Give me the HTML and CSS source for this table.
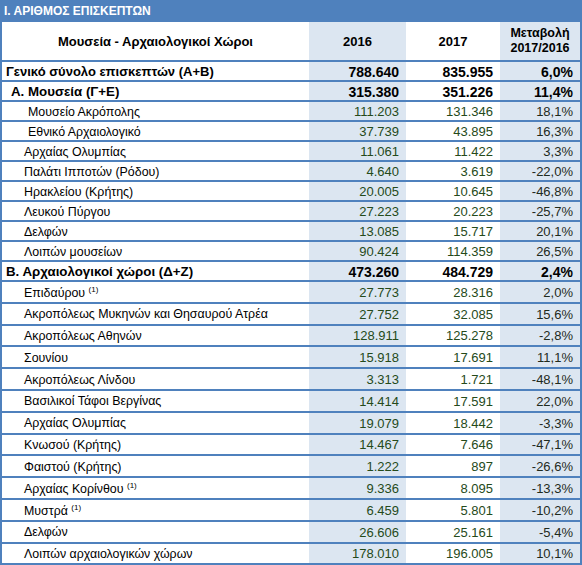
FILE: index.html
```html
<!DOCTYPE html>
<html lang="el">
<head>
  <meta charset="UTF-8" />
  <title>Αριθμός επισκεπτών</title>
  <link rel="stylesheet" href="styles.css">
</head>
<body>

<div class="sheet">
  <div class="title">Ι. ΑΡΙΘΜΟΣ ΕΠΙΣΚΕΠΤΩΝ</div>

  <table class="visitors">
    <colgroup>
      <col class="c-name">
      <col class="c-y1">
      <col class="c-y2">
      <col class="c-ch">
    </colgroup>
    <thead>
      <tr>
        <th class="name">Μουσεία - Αρχαιολογικοί Χώροι</th>
        <th class="shade">2016</th>
        <th>2017</th>
        <th class="shade small">Μεταβολή<br>2017/2016</th>
      </tr>
    </thead>
    <tbody>
      <tr class="total">
        <td class="lvl0">Γενικό σύνολο επισκεπτών (Α+Β)</td>
        <td class="shade">788.640</td><td>835.955</td><td class="shade">6,0%</td>
      </tr>
      <tr class="group">
        <td class="lvl1">Α. Μουσεία (Γ+Ε)</td>
        <td class="shade">315.380</td><td>351.226</td><td class="shade">11,4%</td>
      </tr>
      <tr><td class="lvl3">Μουσείο Ακρόπολης</td><td class="shade">111.203</td><td>131.346</td><td class="shade pct">18,1%</td></tr>
      <tr><td class="lvl3">Εθνικό Αρχαιολογικό</td><td class="shade">37.739</td><td>43.895</td><td class="shade pct">16,3%</td></tr>
      <tr><td class="lvl2">Αρχαίας Ολυμπίας</td><td class="shade">11.061</td><td>11.422</td><td class="shade pct">3,3%</td></tr>
      <tr><td class="lvl2">Παλάτι Ιπποτών (Ρόδου)</td><td class="shade">4.640</td><td>3.619</td><td class="shade pct">-22,0%</td></tr>
      <tr><td class="lvl2">Ηρακλείου (Κρήτης)</td><td class="shade">20.005</td><td>10.645</td><td class="shade pct">-46,8%</td></tr>
      <tr><td class="lvl2">Λευκού Πύργου</td><td class="shade">27.223</td><td>20.223</td><td class="shade pct">-25,7%</td></tr>
      <tr><td class="lvl2">Δελφών</td><td class="shade">13.085</td><td>15.717</td><td class="shade pct">20,1%</td></tr>
      <tr><td class="lvl2">Λοιπών μουσείων</td><td class="shade">90.424</td><td>114.359</td><td class="shade pct">26,5%</td></tr>
      <tr class="group">
        <td class="lvl0">Β. Αρχαιολογικοί χώροι (Δ+Ζ)</td>
        <td class="shade">473.260</td><td>484.729</td><td class="shade">2,4%</td>
      </tr>
    </tbody>
    <tbody class="sites">
      <tr><td class="lvl2">Επιδαύρου <sup>(1)</sup></td><td class="shade">27.773</td><td>28.316</td><td class="shade pct">2,0%</td></tr>
      <tr><td class="lvl2">Ακροπόλεως Μυκηνών και Θησαυρού Ατρέα</td><td class="shade">27.752</td><td>32.085</td><td class="shade pct">15,6%</td></tr>
      <tr><td class="lvl2">Ακροπόλεως Αθηνών</td><td class="shade">128.911</td><td>125.278</td><td class="shade pct">-2,8%</td></tr>
      <tr><td class="lvl2">Σουνίου</td><td class="shade">15.918</td><td>17.691</td><td class="shade pct">11,1%</td></tr>
      <tr><td class="lvl2">Ακροπόλεως Λίνδου</td><td class="shade">3.313</td><td>1.721</td><td class="shade pct">-48,1%</td></tr>
      <tr><td class="lvl2">Βασιλικοί Τάφοι Βεργίνας</td><td class="shade">14.414</td><td>17.591</td><td class="shade pct">22,0%</td></tr>
      <tr><td class="lvl2">Αρχαίας Ολυμπίας</td><td class="shade">19.079</td><td>18.442</td><td class="shade pct">-3,3%</td></tr>
      <tr><td class="lvl2">Κνωσού (Κρήτης)</td><td class="shade">14.467</td><td>7.646</td><td class="shade pct">-47,1%</td></tr>
      <tr><td class="lvl2">Φαιστού (Κρήτης)</td><td class="shade">1.222</td><td>897</td><td class="shade pct">-26,6%</td></tr>
      <tr><td class="lvl2">Αρχαίας Κορίνθου <sup>(1)</sup></td><td class="shade">9.336</td><td>8.095</td><td class="shade pct">-13,3%</td></tr>
      <tr><td class="lvl2">Μυστρά <sup>(1)</sup></td><td class="shade">6.459</td><td>5.801</td><td class="shade pct">-10,2%</td></tr>
      <tr><td class="lvl2">Δελφών</td><td class="shade">26.606</td><td>25.161</td><td class="shade pct">-5,4%</td></tr>
      <tr><td class="lvl2">Λοιπών αρχαιολογικών χώρων</td><td class="shade">178.010</td><td>196.005</td><td class="shade pct">10,1%</td></tr>
    </tbody>
  </table>
</div>

</body>
</html>
```

FILE: styles.css
```css
* {
  margin: 0;
  padding: 0;
  box-sizing: border-box;
}

body {
  background: #fff;
  font-family: 'Liberation Sans', Arial, sans-serif;
  color: #000;
}

.sheet {
  width: 582px;
  border-left: 2px solid #4f81bd;
  border-right: 2px solid #4f81bd;
}

.title {
  height: 22px;
  background: #4f81bd;
  color: #fff;
  font-weight: bold;
  font-size: 12px;
  line-height: 23px;
  padding-left: 4px;
  margin-left: -2px;
  margin-right: -2px;
}

/* Tabla */
.visitors {
  width: 100%;
  border-collapse: collapse;
  table-layout: fixed;
}

.c-name { width: 307px; }
.c-y1 { width: 97px; }
.c-y2 { width: 94px; }
.c-ch { width: 80px; }

.visitors th {
  height: 39px;
  font-size: 13px;
  font-weight: bold;
  text-align: center;
  border-bottom: 2px solid #4f81bd;
}

.visitors th.small {
  font-size: 12.5px;
  line-height: 15px;
}

.visitors td {
  height: 20px;
  font-size: 13px;
  text-align: right;
  padding-right: 7px;
  padding-top: 1px;
  border-bottom: 2px solid #4f81bd;
  color: #254a1a;
  white-space: nowrap;
}

.visitors td.pct {
  color: #1f2a1c;
}

.visitors .sites td {
  height: 21.8px;
}

.shade {
  background: #dce6f1;
}

.visitors td.lvl0,
.visitors td.lvl1,
.visitors td.lvl2,
.visitors td.lvl3 {
  text-align: left;
  color: #000;
  font-size: 12.4px;
}

.lvl0 { padding-left: 4px; }
.lvl1 { padding-left: 9px; }
.lvl2 { padding-left: 22px; }
.lvl3 { padding-left: 26px; }

.total td,
.group td {
  font-weight: bold;
  color: #000;
  font-size: 14px;
}

.visitors .total td.lvl0 {
  font-size: 13px;
}

.visitors .group td.lvl0,
.visitors .group td.lvl1 {
  font-size: 13.3px;
}

sup {
  font-size: 8px;
  vertical-align: 5px;
}
```
